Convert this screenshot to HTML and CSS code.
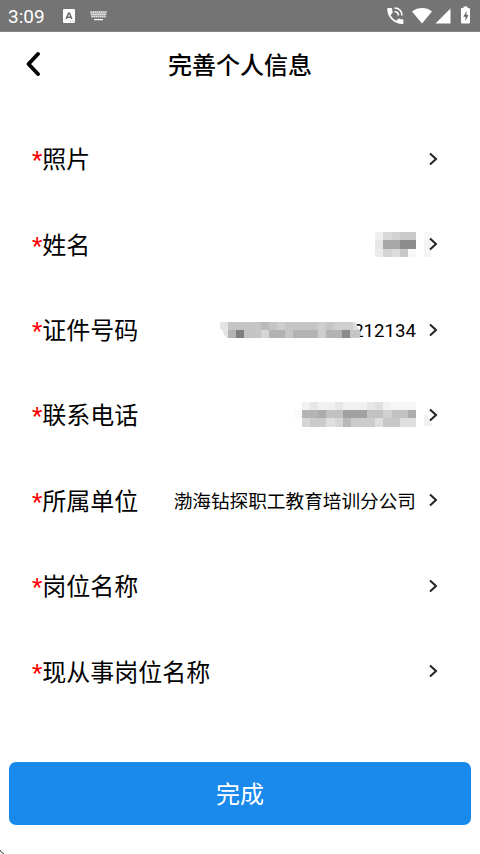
FILE: index.html
```html
<!DOCTYPE html>
<html lang="zh-CN">
<head>
<meta charset="utf-8">
<title>完善个人信息</title>
<link rel="stylesheet" href="styles.css">
</head>
<body>
<div class="status">
  <span class="time">3:09</span>
  <svg class="ime" width="12" height="14" viewBox="0 0 12 14"><rect width="12" height="14" rx="1.300" fill="#fff"/><path d="M3.200 10 5.500 4.300h1L8.800 10M4.200 8.300h3.600" fill="none" stroke="#6b6b6b" stroke-width="1.500"/><path d="M7 12.200h4" stroke="#aaa" stroke-width=".8" stroke-dasharray="1 .5"/></svg>
  <svg class="keyboard" width="17" height="10" viewBox="0 0 17 10"><path d="M.5 1h16M1 3.300h15M1.500 5.500h14" stroke="#eee" stroke-width="1.500" stroke-dasharray="1.500 .6"/><path d="M0 .3h17l-1 6.300H1z" fill="#ddd" opacity=".4"/><path d="M4 8.600h9" stroke="#f4f4f4" stroke-width="1.300"/></svg>
  <svg class="signals" width="86" height="20" viewBox="0 0 86 20">
    <g fill="#fff">
      <path transform="translate(-1.500 -.8) scale(.9)" d="M20 15.500c-1.250 0-2.450-.2-3.570-.57-.35-.11-.74-.03-1.020.24l-2.200 2.200c-2.830-1.440-5.150-3.750-6.590-6.580l2.200-2.210c.28-.27.36-.66.25-1.010C8.700 6.450 8.500 5.250 8.500 4c0-.55-.45-1-1-1H4c-.55 0-1 .45-1 1 0 9.390 7.610 17 17 17 .55 0 1-.45 1-1v-3.500c0-.55-.45-1-1-1z"/>
      <path d="M26 5.500C32 .9 40.500 .9 46 5.500L36 17.500z"/>
      <path d="M64.500 2.500V17.500H49.500z"/>
      <path d="M77.500 2V.5h4V2h1.500q1 0 1 1v13.500q0 1-1 1h-7q-1 0-1-1V3q0-1 1-1z"/>
    </g>
    <path d="M8.500 2q7 .2 7.500 7.500M8.500 5.500q3.800.2 4 4" fill="none" stroke="#fff" stroke-width="1.600"/>
    <path d="m80.500 5-3.200 5.800h2.200V15l3-6h-2z" fill="#6b6b6b"/>
  </svg>
</div>
<header class="header">
  <svg class="back" width="16" height="26" viewBox="0 0 16 26"><path d="M13 3 3.500 13 13 23" fill="none" stroke="#000" stroke-width="3.900" stroke-linecap="round" stroke-linejoin="round"/></svg>
  <h1>完善个人信息</h1>
</header>
<main class="form">
  <div class="row"><span class="label"><i>*</i>照片</span><svg class="arrow" viewBox="0 0 10 14"><path d="m2 1.500 6 5.500-6 5.500"/></svg></div>
  <div class="row"><span class="label"><i>*</i>姓名</span>
    <svg class="mask name-mask" width="57" height="25" viewBox="0 0 57 25" shape-rendering="crispEdges">
      <path fill="#f0f0f0" d="M0 0h8v8H0z"/><path fill="#d9d9d9" d="M8 0h9v8H8z"/><path fill="#d2d2d2" d="M17 0h8v8h-8z"/><path fill="#c9c9c9" d="M25 0h16v8H25z"/>
      <path fill="#e7e7e7" d="M0 8h8v9H0z"/><path fill="#a8a8a8" d="M8 8h17v9H8z"/><path fill="#8d8d8d" d="M25 8h16v9H25z"/>
      <path fill="#ececec" d="M0 17h8v8H0z"/><path fill="#d5d5d5" d="M8 17h9v8H8z"/><path fill="#dcdcdc" d="M17 17h8v8h-8z"/><path fill="#c8c8c8" d="M25 17h8v8h-8z"/><path fill="#f8f8f8" d="M33 17h8v8h-8zM49 0h8v8h-8z"/><path fill="#f4f4f4" d="M49 8h7v17h-7z"/>
    </svg>
    <svg class="arrow" viewBox="0 0 10 14"><path d="m2 1.500 6 5.500-6 5.500"/></svg></div>
  <div class="row"><span class="label"><i>*</i>证件号码</span>
    <svg class="mask id-mask" width="141" height="16" viewBox="0 0 141 16">
      <clipPath id="edge"><path d="M0 0h134q3 1 3 5 4 4 4 8l-2 3H8Q4 14 3 8L0 6z"/></clipPath>
      <g clip-path="url(#edge)" shape-rendering="crispEdges">
        <path fill="#c5c5c5" d="M0 0h141v16H0z"/><path fill="#e4e4e4" d="M0 0h8v16H0z"/><path fill="#bbb" d="M41 0h8v8h-8z"/><path fill="#cecece" d="M57 0h8v8h-8zM98 0h8v8h-8zM114 0h19v8h-19z"/><path fill="#ddd" d="M133 0h8v8h-8z"/>
        <path fill="#b3b3b3" d="M8 8h8v8H8zM49 8h16v8H49zM73 8h25v8H73zM106 8h16v8h-16z"/><path fill="#7e7e7e" d="M16 8h8v8h-8z"/><path fill="#d6d6d6" d="M41 8h8v8h-8z"/><path fill="#cdcdcd" d="M98 8h8v8h-8z"/><path fill="#8c8c8c" d="M122 8h8v8h-8z"/>
      </g>
    </svg>
    <span class="value id">212134</span><svg class="arrow" viewBox="0 0 10 14"><path d="m2 1.500 6 5.500-6 5.500"/></svg></div>
  <div class="row"><span class="label"><i>*</i>联系电话</span>
    <svg class="mask phone-mask" width="139" height="25" viewBox="0 0 139 25" shape-rendering="crispEdges">
      <path fill="#f1f1f1" d="M8 0h114v8H8z"/><path fill="#e7e7e7" d="M16 0h8v8h-8zM41 0h8v8h-8zM73 0h8v8h-8z"/><path fill="#e0e0e0" d="M81 0h8v8h-8z"/><path fill="#f6f6f6" d="M97 0h25v8H97z"/>
      <path fill="#fafafa" d="M0 8h8v8H0z"/><path fill="#b4b4b4" d="M8 8h16v8H8z"/><path fill="#acacac" d="M24 8h8v8h-8zM114 8h8v8h-8z"/><path fill="#c2c2c2" d="M32 8h17v8H32zM73 8h16v8H73zM98 8h16v8H98z"/><path fill="#a1a1a1" d="M49 8h24v8H49z"/><path fill="#d0d0d0" d="M89 8h9v8h-9z"/>
      <path fill="#d6d6d6" d="M8 16h65v9H8z"/><path fill="#cbcbcb" d="M16 16h16v9H16zM57 16h24v9H57z"/><path fill="#dfdfdf" d="M32 16h9v9h-9zM81 16h8v9h-8zM106 16h16v9h-16z"/><path fill="#b8b8b8" d="M49 16h8v9h-8z"/><path fill="#c8c8c8" d="M89 16h17v9H89z"/><path fill="#f0f0f0" d="M130 13h3l5 9v2h-8z"/>
    </svg>
    <svg class="arrow" viewBox="0 0 10 14"><path d="m2 1.500 6 5.500-6 5.500"/></svg></div>
  <div class="row"><span class="label"><i>*</i>所属单位</span><span class="value company">渤海钻探职工教育培训分公司</span><svg class="arrow" viewBox="0 0 10 14"><path d="m2 1.500 6 5.500-6 5.500"/></svg></div>
  <div class="row"><span class="label"><i>*</i>岗位名称</span><svg class="arrow" viewBox="0 0 10 14"><path d="m2 1.500 6 5.500-6 5.500"/></svg></div>
  <div class="row"><span class="label"><i>*</i>现从事岗位名称</span><svg class="arrow" viewBox="0 0 10 14"><path d="m2 1.500 6 5.500-6 5.500"/></svg></div>
</main>
<button class="submit">完成</button>
<svg class="corner" width="4" height="4" viewBox="0 0 4 4"><path d="M0 0 1.500 2.500 4 3.500" fill="none" stroke="#444"/></svg>
</body>
</html>
```
FILE: styles.css
```css
* { box-sizing: border-box; }
body { margin: 0; width: 480px; height: 854px; overflow: hidden; display: flex; flex-direction: column; background: #fff; color: #000; font-family: Roboto, "Noto Sans CJK SC", sans-serif; }
.status { height: 32px; flex: none; display: flex; align-items: center; padding: 0 8px; background: #747474; border-bottom: 1px solid #858585; }
.time { width: 37px; color: #fff; font-size: 19px; line-height: 32px; padding-top: 2px; }
.ime { margin-left: 18px; }
.keyboard { margin-left: 15px; }
.signals { margin-left: auto; }
.header { height: 66px; flex: none; display: grid; grid-template-columns: 48px 1fr 48px; align-items: center; }
.back { margin: -2px 0 0 25px; }
.header h1 { margin: 0; padding-top: 2px; text-align: center; font-size: 24px; line-height: 36px; font-weight: 500; }
.form { height: 598px; flex: none; margin-top: 18px; padding: 0 42.500px 0 32px; display: grid; grid-template-rows: repeat(7, 1fr); }
.row { display: flex; align-items: center; }
.label { margin-right: auto; padding-top: 3px; font-size: 24px; line-height: 36px; white-space: nowrap; }
.label i { color: #f00; font-style: normal; }
.value { margin-right: -.5px; font-size: 18.650px; line-height: 28px; white-space: nowrap; }
.id { padding-top: 2px; }
.company { padding-top: 4px; }
.arrow { position: relative; z-index: 1; width: 10px; height: 14px; flex: none; margin-left: 12px; fill: none; stroke: #222; stroke-width: 2; }
.mask { flex: none; position: relative; }
.name-mask { margin-right: -16px; }
.id-mask { z-index: 1; margin-right: -7.500px; }
.phone-mask { margin-right: -17px; }
.submit { margin: 48px 9px 0; height: 62.500px; flex: none; border: 0; border-radius: 7px; padding: 0 0 2px; background: #198aec; color: #fff; font: 24px Roboto, "Noto Sans CJK SC", sans-serif; }
.corner { margin-top: auto; }
```
